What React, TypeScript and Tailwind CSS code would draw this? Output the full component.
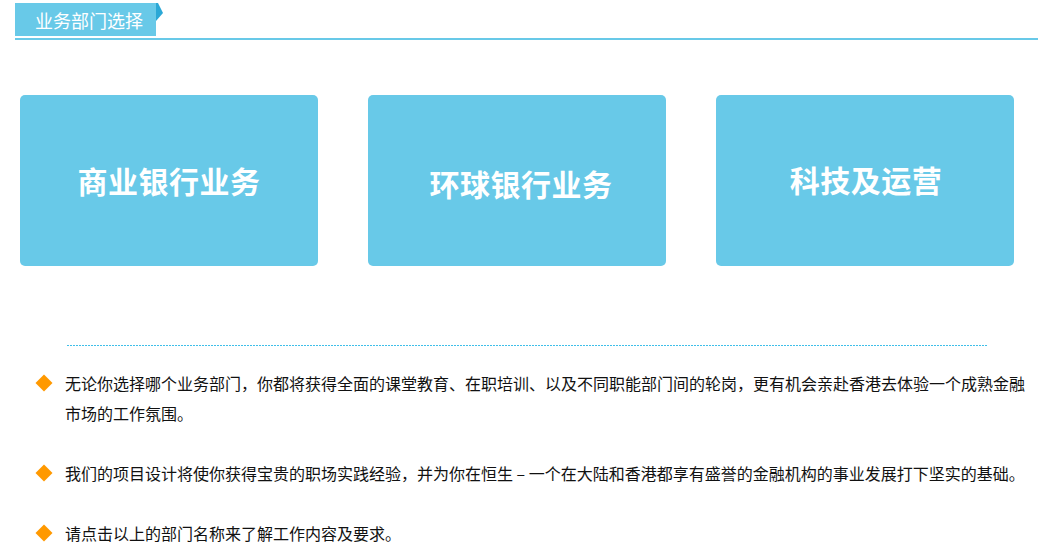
import React from 'react';

const blue = 'bg-[#68c9e8]';

const cards = [
  { label: '商业银行业务', cls: '' },
  { label: '环球银行业务', cls: 'pt-[6px] pl-[8px]' },
  { label: '科技及运营', cls: 'pb-[3px] pl-[2px]' },
];

const notes = [
  '无论你选择哪个业务部门，你都将获得全面的课堂教育、在职培训、以及不同职能部门间的轮岗，更有机会亲赴香港去体验一个成熟金融市场的工作氛围。',
  '我们的项目设计将使你获得宝贵的职场实践经验，并为你在恒生 – 一个在大陆和香港都享有盛誉的金融机构的事业发展打下坚实的基础。',
  '请点击以上的部门名称来了解工作内容及要求。',
];

export default function App() {
  return (
    <div className="w-[1043px] h-[554px] overflow-hidden bg-white font-['Noto_Sans_CJK_SC','Noto_Sans',sans-serif]">
      {/* section title */}
      <div className="pt-[3px] pl-[15px]">
        <div className="flex items-start">
          <div className={`${blue} w-[141px] h-[33px] pl-[20px] text-white text-[18px] leading-[34px]`}>
            业务部门选择
          </div>
          <svg width="8" height="19" viewBox="0 0 8 19" className="block">
            <polygon points="0,0 2,0 7,10 0,18" fill="#2ba8d6" />
          </svg>
        </div>
        <div className={`${blue} mt-[2px] h-[2px] w-[1023px]`} />
      </div>

      {/* department cards */}
      <div className="mt-[55px] pl-[20px] flex gap-[50px]">
        {cards.map((c) => (
          <a
            key={c.label}
            href="#"
            className={`${blue} w-[298px] h-[171px] rounded-[5px] flex items-center justify-center text-white font-bold text-[30px] tracking-[0.5px] ${c.cls}`}
          >
            {c.label}
          </a>
        ))}
      </div>

      {/* dotted divider, 2px dash / 1px gap */}
      <div className="mt-[79px] ml-[67px] w-[920px] h-[1px] bg-[image:repeating-linear-gradient(90deg,#3fbfe9_0px,#3fbfe9_2px,#ffffff_2px,#ffffff_3px)]" />

      {/* notes */}
      <ul className="mt-[22px] pl-[35px]">
        {notes.map((n) => (
          <li key={n} className="flex items-start mb-[30px]">
            <div className="w-[30px] h-[30px] flex items-center shrink-0">
              <span className="block w-[12px] h-[12px] ml-[3px] rotate-45 bg-[#ff9900]" />
            </div>
            <p className="w-[968px] text-[16px] leading-[30px] text-[#111]">{n}</p>
          </li>
        ))}
      </ul>
    </div>
  );
}
